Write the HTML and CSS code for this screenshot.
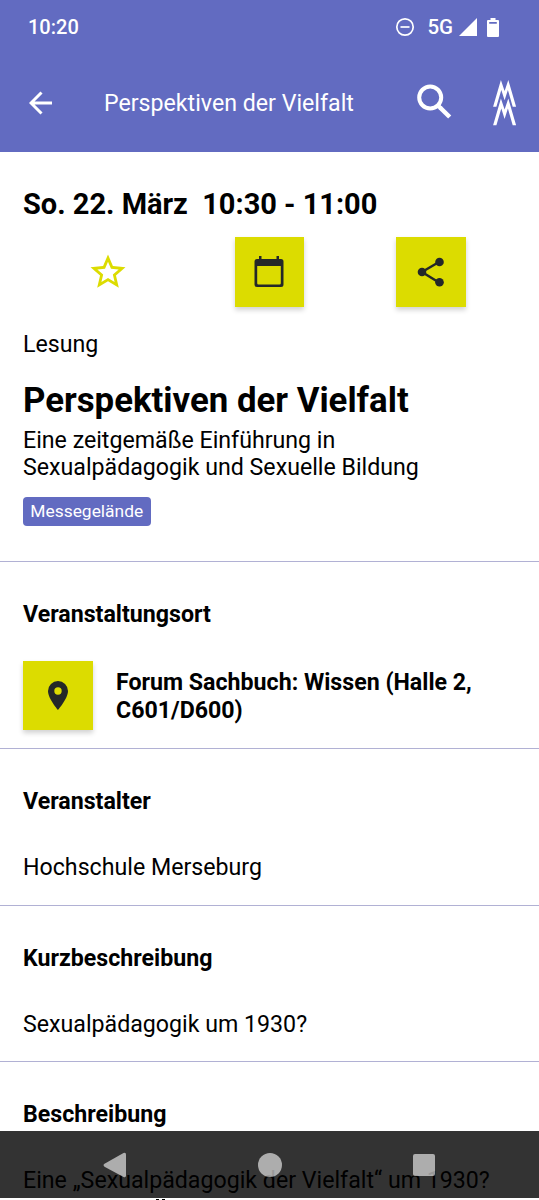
FILE: index.html
```html
<!DOCTYPE html>
<html lang="de">
<head>
<meta charset="utf-8">
<title>Perspektiven der Vielfalt</title>
<link rel="stylesheet" href="styles.css">
</head>
<body>
<div class="screen">
  <header class="top">
    <div class="status">
      <span class="clock">10:20</span>
      <svg class="dnd" width="20" height="20" viewBox="0 0 20 20"><circle cx="10" cy="10" r="8.2"/><path d="M5.500 10h9"/></svg>
      <span class="network">5G</span>
      <svg class="signal" width="18" height="18" viewBox="0 0 18 18"><path d="M18 0v18H0z"/></svg>
      <svg class="battery" width="12" height="19" viewBox="0 0 12 19"><path fill-rule="evenodd" d="M3.500 0h5v2H11q1 0 1 1v15q0 1-1 1H1q-1 0-1-1V3q0-1 1-1h2.500zM2.200 4v1.800h7.600V4z"/></svg>
    </div>
    <div class="appbar">
      <svg class="back" width="24" height="24" viewBox="0 0 24 24"><path d="M23 12H2M12.500 1.500L2 12l10.500 10.500"/></svg>
      <h2 class="bar-title">Perspektiven der Vielfalt</h2>
      <svg class="search" width="36" height="36" viewBox="0 0 36 36"><circle cx="13.200" cy="13.500" r="11"/><path d="M21 21.500l3 3"/><path class="handle" d="M23 23.500l9.700 9.500"/></svg>
      <svg class="logo" width="25" height="48" viewBox="-.4 0 25 48"><path id="peak" d="M.7 27.700L8.500 1l3.700 11L15.900 1l7.800 26.700h-3.400L15.500 11l-3.300 10.300L8.900 11 4 27.700z"/><use href="#peak" y="18.600"/></svg>
    </div>
  </header>
  <main>
    <section class="intro">
      <p class="date">So. 22. März&nbsp; 10:30 - 11:00</p>
      <div class="actions">
        <button class="tile plain" aria-label="Merken"><svg width="42" height="42" viewBox="0 0 24 24"><path d="M22 9.240l-7.190-.62L12 2 9.190 8.630 2 9.240l5.460 4.730L5.820 21 12 17.270 18.180 21l-1.630-7.030L22 9.240zM12 15.400l-3.760 2.270 1-4.280-3.320-2.880 4.380-.38L12 6.100l1.710 4.040 4.380.38-3.320 2.880 1 4.280L12 15.400z"/></svg></button>
        <button class="tile" aria-label="Kalender"><svg width="30" height="34" viewBox="0 0 30 34"><path fill-rule="evenodd" d="M5 1h2.500v3h15V1H25v3h2q2.500 0 2.500 2.500v23Q29.500 32 27 32H3Q.5 32 .5 29.500v-23Q.5 4 3 4h2zM3.200 11v17.300q0 1.200 1.200 1.200h21.200q1.200 0 1.200-1.200V11z"/></svg></button>
        <button class="tile" aria-label="Teilen"><svg width="28" height="30" viewBox="0 0 28 30"><path class="links" d="M22 5L5 15l17 10.500"/><circle cx="22.500" cy="5" r="4.300"/><circle cx="5" cy="15" r="4.300"/><circle cx="22.500" cy="25.300" r="4.300"/></svg></button>
      </div>
      <p class="kind">Lesung</p>
      <h1 class="title">Perspektiven der Vielfalt</h1>
      <p class="subtitle">Eine zeitgemäße Einführung in Sexualpädagogik und Sexuelle Bildung</p>
      <span class="tag">Messegelände</span>
    </section>
    <section class="block venue">
      <h3>Veranstaltungsort</h3>
      <div class="place">
        <button class="tile" aria-label="Lageplan"><svg width="20" height="29" viewBox="0 0 20 29"><path fill-rule="evenodd" d="M10 0a10 10 0 0 0-10 10C0 17.500 10 29 10 29s10-11.500 10-19A10 10 0 0 0 10 0zm0 6.300a3.700 3.700 0 1 1 0 7.400 3.700 3.700 0 0 1 0-7.400z"/></svg></button>
        <p>Forum Sachbuch: Wissen (Halle 2, C601/D600)</p>
      </div>
    </section>
    <section class="block">
      <h3>Veranstalter</h3>
      <p>Hochschule Merseburg</p>
    </section>
    <section class="block">
      <h3>Kurzbeschreibung</h3>
      <p>Sexualpädagogik um 1930?</p>
    </section>
    <section class="block">
      <h3>Beschreibung</h3>
      <p>Eine „Sexualpädagogik der Vielfalt“ um 1930?</p>
      <svg class="cutoff" width="12" height="4" viewBox="0 0 12 4"><path d="M1 0h3v3H1zM7 0h3v3H7z"/></svg>
    </section>
  </main>
  <nav class="sysnav">
    <svg width="24" height="26" viewBox="0 0 24 26"><path d="M20.500 1Q23 0 23 2.500v21q0 2.500-2.500 1.500l-19-10.300q-2-1.700 0-3z"/></svg>
    <svg width="24" height="24" viewBox="0 0 24 24"><circle cx="12" cy="12" r="12"/></svg>
    <svg width="22" height="22" viewBox="0 0 22 22"><rect width="22" height="22" rx="2"/></svg>
  </nav>
</div>
</body>
</html>
```
FILE: styles.css
```css
* { box-sizing: border-box; margin: 0; padding: 0; }
body { background: #fff; color: #000; font: 23.18px/27.6px Roboto, sans-serif; }
.screen { position: relative; width: 539px; height: 1200px; overflow: hidden; }
.top { height: 152px; background: #626bc1; color: #fff; }
.status { height: 54px; padding: 0 40px 0 28px; display: flex; align-items: center; }
.clock { flex: 1; font-size: 20px; font-weight: 500; padding-top: 1px; }
.status svg { fill: #fff; }
.status .dnd { fill: none; stroke: #fff; stroke-width: 1.7; margin-right: 12px; }
.network { font-size: 20.500px; font-weight: 500; margin-right: 6px; padding-top: 1px; }
.signal { margin-right: 10px; }
.appbar { height: 98px; padding: 0 22px 0 29px; display: flex; align-items: center; }
.appbar svg { fill: none; stroke: #fff; stroke-width: 3; }
.appbar .logo { fill: #fff; stroke: none; }
.bar-title { flex: 1; margin-left: 51px; padding-top: 2px; font-size: 23.18px; font-weight: 400; }
.appbar .search { stroke-width: 4; margin: 0 39px 2px 0; }
.search .handle { stroke-width: 4.500; }
.intro { height: 409px; padding: 38px 23px 0; }
.date { font-size: 28.98px; line-height: 28px; font-weight: 700; white-space: nowrap; }
.actions { margin-top: 19px; display: grid; grid-template-columns: repeat(3, 1fr); width: 485px; justify-items: center; margin-left: 4px; }
.tile { width: 69.500px; height: 69.500px; border: 0; background: #dcdc00; display: grid; place-items: center; flex: none; box-shadow: 0 3px 5px rgba(0,0,0,.18); }
.tile svg { fill: #242828; }
.links { fill: none; stroke: #242828; stroke-width: 2.500; }
.plain { background: none; box-shadow: none; }
.plain svg { fill: #dcdc00; }
.kind { margin-top: 24.500px; }
.title { margin-top: 21px; font-size: 34.800px; line-height: 40px; font-weight: 700; }
.subtitle { margin-top: 7px; width: 420px; }
.tag { display: block; width: 127.500px; height: 29px; margin-top: 15px; border-radius: 4px; background: #626bc1; color: #fff; font-size: 17.400px; line-height: 29px; text-align: center; }
.block { height: 156.500px; border-top: 1px solid #b1b1d4; padding: 38px 23px 0; }
.venue { height: 187px; }
.block h3 { font-size: 23.180px; line-height: 28px; font-weight: 700; }
.block > p { margin-top: 39px; white-space: nowrap; }
.place { display: flex; align-items: center; margin-top: 32.500px; gap: 23.500px; }
.place p { font-weight: 700; padding-top: 3px; }
.cutoff { display: block; margin: 4px 0 0 131.500px; }
.sysnav { position: absolute; left: 0; right: 0; top: 1130.500px; height: 67.500px; background: rgba(0,0,0,.8); display: flex; align-items: center; justify-content: space-between; padding: 1px 104px 0 103px; }
.sysnav svg { fill: rgba(255,255,255,.6); }
```
